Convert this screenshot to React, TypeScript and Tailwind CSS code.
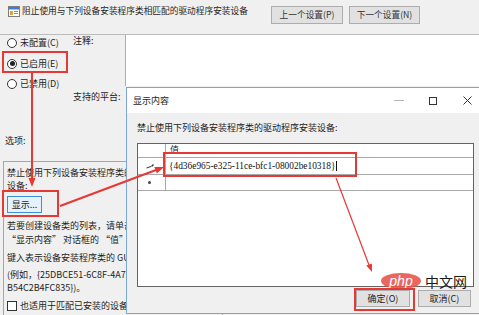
import React from "react";

function TitleIcon() {
  return (
    <svg width="12" height="11" viewBox="0 0 12 11" className="ml-[8px] mt-[6px] shrink-0">
      <rect x="0.5" y="0.5" width="11" height="10" fill="#ffffff" stroke="#7d7d7d" />
      <rect x="1" y="1" width="10" height="2.5" fill="#3f7fd0" />
      <rect x="2" y="5" width="3" height="4" fill="#d9a441" />
      <line x1="6" y1="5.5" x2="10" y2="5.5" stroke="#8a8a8a" />
      <line x1="6" y1="7.5" x2="10" y2="7.5" stroke="#8a8a8a" />
    </svg>
  );
}

function Radio({ label, checked }: { label: string; checked?: boolean }) {
  return (
    <div className="flex h-[14px] items-center gap-[3px]">
      <span className="flex h-[10px] w-[10px] items-center justify-center rounded-full border border-[#333333] bg-white">
        {checked && <span className="h-[5px] w-[5px] rounded-full bg-[#222222]" />}
      </span>
      <span className="whitespace-nowrap leading-[12px]">{label}</span>
    </div>
  );
}

function Overlay() {
  const red = "#e53935";
  return (
    <svg
      className="pointer-events-none absolute left-0 top-0"
      width="479"
      height="315"
      viewBox="0 0 479 315"
    >
      <rect x="3" y="52" width="64" height="20" fill="none" stroke={red} strokeWidth="2" />
      <rect x="3" y="191" width="55" height="25" fill="none" stroke={red} strokeWidth="2" />
      <rect x="164" y="153" width="192" height="23" fill="none" stroke={red} strokeWidth="2" />
      <rect x="355" y="289" width="59" height="21" fill="none" stroke={red} strokeWidth="2" />
      <line x1="32" y1="73" x2="32" y2="180" stroke={red} strokeWidth="2" />
      <polygon points="28.5,178 35.5,178 32,187" fill={red} />
      <line x1="60" y1="206" x2="156" y2="170" stroke={red} strokeWidth="2" />
      <polygon points="164,167 156.9,173.5 154.3,166.9" fill={red} />
      <line x1="336" y1="178" x2="369" y2="265" stroke={red} strokeWidth="1.2" />
      <polygon points="372,272 371.9,263.4 366.3,265.6" fill={red} />
    </svg>
  );
}

function Dialog() {
  return (
    <div className="absolute left-[126px] top-[87px] flex h-[227px] w-[359px] flex-col border border-[#7ba7d6] bg-[#f0f0f0]">
      <div className="flex h-[25px] shrink-0 items-center bg-white pl-[6px]">
        <span className="leading-[12px]">显示内容</span>
        <div className="ml-auto flex h-full">
          <div className="flex h-full w-[34px] items-center justify-center">
            <span className="h-px w-[10px] bg-[#b5b5b5]" />
          </div>
          <div className="flex h-full w-[34px] items-center justify-center">
            <span className="h-[8px] w-[8px] border border-[#333333]" />
          </div>
          <div className="flex h-full w-[34px] items-center justify-center">
            <svg width="9" height="9" viewBox="0 0 9 9">
              <line x1="0.5" y1="0.5" x2="8.5" y2="8.5" stroke="#333" strokeWidth="1" />
              <line x1="8.5" y1="0.5" x2="0.5" y2="8.5" stroke="#333" strokeWidth="1" />
            </svg>
          </div>
        </div>
      </div>
      <div className="flex flex-col px-[10px] pt-[9px]">
        <div className="h-[12px] whitespace-nowrap leading-[12px]">
          禁止使用下列设备安装程序类的驱动程序安装设备:
        </div>
        <div className="mt-[9px] flex h-[144px] w-[337px] flex-col border border-[#646464] bg-white">
          <div className="flex h-[14px] border-b border-[#a9a9a9]">
            <div className="w-[28px] border-r border-[#a9a9a9]" />
            <div className="pl-[4px] leading-[12px]">值</div>
          </div>
          <div className="flex h-[17px] border-b border-[#a9a9a9]">
            <div className="flex w-[28px] items-center justify-center border-r border-[#a9a9a9]">
              <svg width="8" height="5" viewBox="0 0 8 5" className="ml-[-4px]">
                <line x1="0.5" y1="4" x2="5" y2="2.5" stroke="#333" strokeWidth="1" />
                <line x1="5.5" y1="2.5" x2="7.5" y2="0.5" stroke="#333" strokeWidth="1.2" />
              </svg>
            </div>
            <div className="flex items-center pl-[3px] font-['Liberation_Serif',serif] text-[9.4px] leading-[12px] text-[#111111]">
              {"{4d36e965-e325-11ce-bfc1-08002be10318}"}
              <span className="ml-[1px] h-[10px] w-px bg-[#111111]" />
            </div>
          </div>
          <div className="flex h-[16px] border-b border-[#a9a9a9]">
            <div className="flex w-[28px] items-center justify-center border-r border-[#a9a9a9]">
              <span className="ml-[-4px] h-[3px] w-[3px] rounded-full bg-[#444444]" />
            </div>
            <div className="flex-1" />
          </div>
        </div>
        <div className="mr-[3px] mt-[3px] flex justify-end gap-[8px]">
          <button className="h-[17px] w-[54px] border border-[#adadad] bg-[#e1e1e1] text-[9px] leading-[12px] text-[#222]">
            确定(O)
          </button>
          <button className="h-[17px] w-[53px] border border-[#adadad] bg-[#e1e1e1] text-[9px] leading-[12px] text-[#222]">
            取消(C)
          </button>
        </div>
      </div>
    </div>
  );
}

export default function App() {
  return (
    <div className="relative h-[315px] w-[479px] overflow-hidden bg-[#f0f0f0] font-['Noto_Sans_CJK_SC',sans-serif] text-[9px] text-[#1e1e1e]">
      <div className="flex h-[35px] items-start border-b border-[#bcbcbc]">
        <TitleIcon />
        <div className="ml-[2px] mt-[5px] whitespace-nowrap text-[8.7px] leading-[12px]">
          阻止使用与下列设备安装程序类相匹配的驱动程序安装设备
        </div>
        <div className="ml-auto mr-[59px] mt-[6px] flex gap-[6px]">
          <button className="h-[18px] w-[72px] border border-[#adadad] bg-[#e1e1e1] text-[8.7px] leading-[12px] text-[#333]">
            上一个设置(P)
          </button>
          <button className="h-[18px] w-[71px] border border-[#adadad] bg-[#e1e1e1] text-[8.7px] leading-[12px] text-[#333]">
            下一个设置(N)
          </button>
        </div>
      </div>
      <div className="flex">
        <div className="flex w-[125px] shrink-0 flex-col">
          <div className="flex h-[98px]">
            <div className="flex w-[73px] flex-col gap-[6.5px] pl-[7px] pt-[1px]">
              <Radio label="未配置(C)" />
              <Radio label="已启用(E)" checked />
              <Radio label="已禁用(D)" />
            </div>
            <div className="flex flex-col">
              <div className="h-[12px] whitespace-nowrap leading-[12px]">注释:</div>
              <div className="mt-[44px] h-[12px] whitespace-nowrap leading-[12px]">支持的平台:</div>
            </div>
          </div>
          <div className="mt-[2px] h-[12px] pl-[5px] leading-[12px]">选项:</div>
          <div className="ml-[3px] mt-[14px] flex h-[170px] w-[220px] flex-col border border-[#a6a6a6] pl-[3px] pt-[5px]">
            <div className="h-[12px] whitespace-nowrap leading-[12px]">禁止使用下列设备安装程序类的驱动程序安装</div>
            <div className="mt-[1px] h-[12px] whitespace-nowrap leading-[12px]">设备:</div>
            <button className="mt-[4px] flex h-[17px] w-[35px] items-center justify-center border border-[#3c8fd8] bg-[#e5f1fb] text-[9px] leading-[12px]">
              显示...
            </button>
            <div className="mt-[7px] h-[12px] whitespace-nowrap leading-[12px]">若要创建设备类的列表，请单击</div>
            <div className="mt-[2px] h-[12px] whitespace-nowrap leading-[12px]">  “显示内容” 对话框的 “值” 列中</div>
            <div className="mt-[6px] h-[12px] whitespace-nowrap leading-[12px]">键入表示设备安装程序类的 GUID</div>
            <div className="mt-[5px] h-[12px] whitespace-nowrap leading-[12px]">(例如，{"{"}25DBCE51-6C8F-4A72-8A6D-</div>
            <div className="mt-[1px] h-[12px] whitespace-nowrap leading-[12px]">B54C2B4FC835{"}"})。</div>
            <div className="mt-[6px] flex h-[12px] items-center gap-[3px] whitespace-nowrap leading-[12px]">
              <span className="h-[10px] w-[10px] border border-[#333333] bg-white" />
              <span>也适用于匹配已安装的设备。</span>
            </div>
          </div>
        </div>
        <div className="h-[51px] flex-1 border-l border-[#adadad] bg-white" />
      </div>

      <Dialog />

      <div className="pointer-events-none absolute left-[381px] top-[273px] flex items-center gap-[4px]">
        <div className="flex h-[16px] w-[40px] items-center justify-center rounded-[50%] bg-[#e8574f]/90">
          <span className="font-['Liberation_Sans',sans-serif] text-[14px] italic leading-[14px] text-white">php</span>
        </div>
        <span className="text-[14px] leading-[16px] text-[#1a1a1a]">中文网</span>
      </div>

      <Overlay />
    </div>
  );
}
